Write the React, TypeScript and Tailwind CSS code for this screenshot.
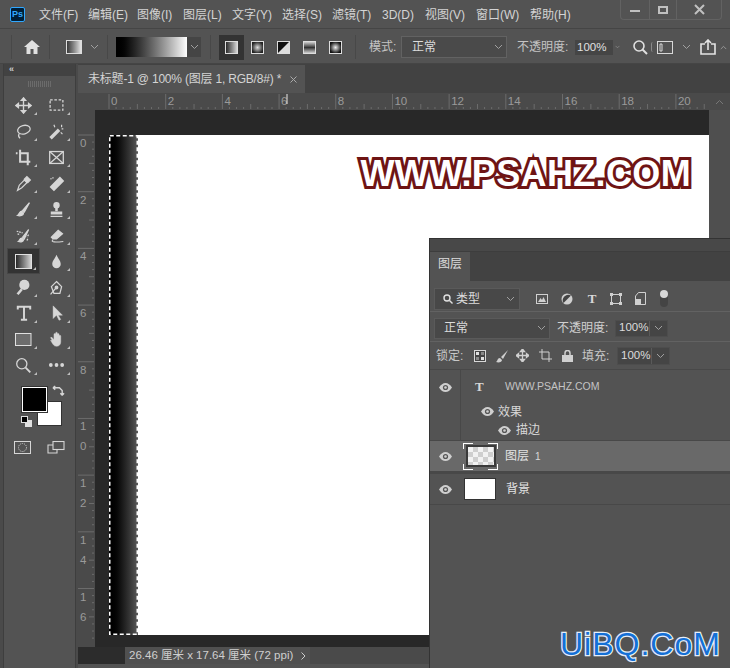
import React from "react";

const F = "[font-family:'Liberation_Sans','Noto_Sans_CJK_SC',sans-serif]";
const C = "#d6d6d6";

const Chev = ({ className = "", color = "#a0a0a0" }: { className?: string; color?: string }) => (
  <svg width="9" height="6" viewBox="0 0 9 6" className={className}><path d="M1 1l3.5 3.5L8 1" fill="none" stroke={color} strokeWidth="1" /></svg>
);

const Svg = ({ children, w = 20, h = 20 }: { children: React.ReactNode; w?: number; h?: number }) => (
  <svg width={17} height={17} viewBox={`0 0 ${w} ${h}`} fill="none" stroke={C} strokeWidth="1.5">{children}</svg>
);

const tools: [React.ReactNode, React.ReactNode][] = [
  [
    <Svg><path d="M10 2v16M2 10h16M10 1l-2.5 3h5zM10 19l-2.5-3h5zM1 10l3-2.5v5zM19 10l-3-2.5v5z" fill={C} strokeWidth="1.6" /></Svg>,
    <Svg><rect x="2.5" y="3.5" width="15" height="12" strokeDasharray="3 2" /></Svg>,
  ],
  [
    <Svg><ellipse cx="10.500" cy="8" rx="7.500" ry="5" transform="rotate(-15 10 8)" /><path d="M5 13c-2 2 0 4 1 5" /></Svg>,
    <Svg><path d="M3 18L13 8" strokeWidth="4" /><path d="M16 2v3M15 11l2 2M7 2l1 3M18 7h-2" strokeWidth="1.400" /></Svg>,
  ],
  [
    <Svg><path d="M1 5h2M6 1v14h12M6 5h9v14" strokeWidth="2.400" /></Svg>,
    <Svg><rect x="2" y="3" width="16" height="14" /><path d="M2 3l16 14M18 3L2 17" /></Svg>,
  ],
  [
    <Svg><path d="M3 18l2-6 6-6 3 3-6 6z" strokeWidth="1.400" /><path d="M11 5l3-3 4 4-3 3z" fill={C} /></Svg>,
    <Svg><path d="M4 14L14 4l3 3L7 17z" fill={C} strokeWidth="3" /><path d="M3 5l2-2 2 1" strokeDasharray="1.500 1.500" /></Svg>,
  ],
  [
    <Svg><path d="M17 2L9 11l2 2z" fill={C} /><path d="M8 12c-3 0-3 4-5 5 3 1 7 0 7-3z" fill={C} /></Svg>,
    <Svg><circle cx="10" cy="5" r="3" fill={C} /><path d="M10 8v4" strokeWidth="3" /><path d="M4 13h12v2H4zM3 18h14" fill={C} /></Svg>,
  ],
  [
    <Svg><path d="M16 3L9 12l2 2z" fill={C} /><path d="M8 13c-3 0-2 3-4 4 3 1 6 0 6-2z" fill={C} /><path d="M2 5l7 2M3 8l3 1M16 9l-2 3M15 14l-1 2" strokeDasharray="2 1" /></Svg>,
    <Svg><path d="M4 12l8-8 5 4-7 6H6z" fill={C} /><path d="M6 15c-4 3 3 3 12 2" strokeWidth="1.200" /></Svg>,
  ],
  [
    <svg width="17" height="15" viewBox="0 0 17 15"><defs><linearGradient id="tg"><stop offset="0" stopColor="#222" /><stop offset="1" stopColor="#d8d8d8" /></linearGradient></defs><rect x="0.500" y="0.500" width="16" height="14" fill="url(#tg)" stroke="#e0e0e0" /></svg>,
    <Svg><path d="M10 2c2 5 5 7 5 11a5 5 0 01-10 0c0-4 3-6 5-11z" fill={C} stroke="none" /></Svg>,
  ],
  [
    <Svg><circle cx="11" cy="7" r="6" fill={C} stroke="none" /><path d="M8 12l-5 6" strokeWidth="3" /></Svg>,
    <Svg><path d="M10 3l6 6-2 8H7L4 9z" /><path d="M3 18L9 11" /><circle cx="10" cy="10" r="1.500" fill={C} /></Svg>,
  ],
  [
    <svg width="16" height="16" viewBox="0 0 18 18" fill="none" stroke={C}><path d="M2 5V2h14v3M9 2v14M5.500 16.500h7" strokeWidth="2.200" /></svg>,
    <Svg><path d="M6 1v15l4-4 3 6 2-1-3-5h5z" fill={C} strokeWidth="0.500" /></Svg>,
  ],
  [
    <svg width="17" height="13" viewBox="0 0 17 13"><rect x="0.500" y="0.500" width="15.500" height="12" fill="#6d6d6d" stroke="#e0e0e0" /></svg>,
    <Svg><path d="M5 11l-2-3 1-1 3 3V4a1 1 0 012 0V2.500a1 1 0 012 0V4a1 1 0 012 0v2a1 1 0 012 0v7c0 3-2 5-5 5-3 0-4-2-7-7z" fill={C} strokeWidth="0.500" /></Svg>,
  ],
  [
    <Svg><circle cx="8" cy="8" r="6" /><path d="M12.500 12.500L18 18" strokeWidth="2.200" /></Svg>,
    <svg width="17" height="6" viewBox="0 0 18 6" fill={C}><circle cx="3" cy="3" r="2" /><circle cx="9" cy="3" r="2" /><circle cx="15" cy="3" r="2" /></svg>,
  ],
];

function Toolbar() {
  return (
    <div className="w-[78px] shrink-0 flex h-full">
      <div className="w-[4px] bg-[#4a4a4a] border-r border-[#3e3e3e]" />
      <div className="w-[71px] flex flex-col bg-[#535353]">
        <div className="h-[12px] bg-[#424242] text-[#d0d0d0] text-[9px] leading-[11px] pl-[5px] tracking-[-1px] font-bold">‹‹</div>
        <div className="h-[6px] mt-[5px] mx-[24px] bg-[repeating-linear-gradient(90deg,#6b6b6b_0_1px,transparent_1px_2px)]" />
        <div className="grid grid-cols-[33px_33px] auto-rows-[26px] pl-[3px] mt-[5px]">
          {tools.map((row, r) =>
            row.map((ic, c) => (
              <div key={`${r}-${c}`} className={`relative flex items-center justify-center ${r === 6 && c === 0 ? "bg-[#333333] border border-[#464646]" : ""}`}>
                {ic}
                <span className="absolute right-[3px] bottom-[3px] w-0 h-0 border-l-[3px] border-l-transparent border-b-[3px] border-b-[#bdbdbd]" />
              </div>
            ))
          )}
        </div>
        <div className="relative h-[54px] mt-[5px] left-[1px]">
          <div className="absolute left-[17px] top-[4px] w-[25px] h-[25px] bg-black border border-white z-10 outline outline-1 outline-[#333]" />
          <div className="absolute left-[32px] top-[18px] w-[25px] h-[25px] bg-white border border-[#333]" />
          <svg className="absolute left-[47px] top-[2px]" width="13" height="12" viewBox="0 0 14 13" fill="none" stroke={C} strokeWidth="1.500"><path d="M1 3h7l3 3v5M1 3l2.500-2M1 3l2.500 2M11 11l-2-2M11 11l2-2" /></svg>
          <div className="absolute left-[16px] top-[33px] w-[11px] h-[11px]">
            <div className="absolute left-[4px] top-[4px] w-[7px] h-[7px] bg-[#e0e0e0]" />
            <div className="absolute left-0 top-0 w-[7px] h-[7px] bg-black border border-[#ddd]" />
          </div>
        </div>
        <div className="flex pl-[10px] gap-[16px] mt-[4px] items-end">
          <svg width="17" height="13" viewBox="0 0 17 13" fill="none" stroke={C}><rect x="0.500" y="0.500" width="16" height="12" /><circle cx="8.500" cy="6.500" r="4" strokeDasharray="1 1" /></svg>
          <svg width="18" height="13" viewBox="0 0 18 13" fill="none" stroke={C} strokeWidth="1.100"><rect x="6" y="0.500" width="11" height="8" /><path d="M6 4H1v8h9V8.500" /></svg>
        </div>
      </div>
      <div className="w-[3px] bg-[#4a4a4a] border-l border-[#3e3e3e]" />
    </div>
  );
}

function OptionsBar() {
  const modes = [
    <><rect x="0.500" y="0.500" width="12" height="12" fill="url(#m1)" stroke="#ddd" /></>,
    <><rect x="0.500" y="0.500" width="12" height="12" fill="url(#m2)" stroke="#ddd" /></>,
    <><rect x="0.500" y="0.500" width="12" height="12" fill="#ddd" stroke="#ddd" /><path d="M1 1h11L1 12z" fill="#111" /></>,
    <><rect x="0.500" y="0.500" width="12" height="12" fill="url(#m3)" stroke="#ddd" /></>,
    <><rect x="0.500" y="0.500" width="12" height="12" fill="url(#m4)" stroke="#ddd" /></>,
  ];
  return (
    <div className="h-[36px] pt-[2px] bg-[#535353] border-t border-b border-[#454545] flex items-center text-[12px] text-[#c4c4c4] relative">
      <div className="w-[1px] h-[24px] bg-[#484848] ml-[11px]" />
      <svg className="ml-[12px]" width="16" height="14" viewBox="0 0 16 14" fill="#e0e0e0"><path d="M8 0L0 7h2.500v7h4V9h3v5h4V7H16z" /></svg>
      <div className="w-[1px] h-[24px] bg-[#484848] ml-[9px]" />
      <div className="ml-[16px] w-[16px] h-[14px] border border-[#ddd] bg-gradient-to-r from-[#3a3a3a] to-[#e4e4e4]" />
      <Chev className="ml-[8px]" />
      <div className="w-[1px] h-[24px] bg-[#484848] ml-[8px]" />
      <div className="ml-[8px] flex h-[20px] w-[85px] bg-[#454545]">
        <div className="w-[71px] h-full bg-gradient-to-r from-black to-white" />
        <div className="flex-1 flex items-center justify-center"><Chev /></div>
      </div>
      <div className="w-[1px] h-[24px] bg-[#484848] ml-[9px]" />
      <svg width="0" height="0" className="absolute">
        <defs>
          <linearGradient id="m1"><stop offset="0" stopColor="#222" /><stop offset="1" stopColor="#ddd" /></linearGradient>
          <radialGradient id="m2"><stop offset="0" stopColor="#ddd" /><stop offset="1" stopColor="#222" /></radialGradient>
          <linearGradient id="m3" x2="0" y2="1"><stop offset="0" stopColor="#ddd" /><stop offset="0.500" stopColor="#333" /><stop offset="1" stopColor="#ddd" /></linearGradient>
          <radialGradient id="m4"><stop offset="0" stopColor="#eee" /><stop offset="1" stopColor="#111" /></radialGradient>
        </defs>
      </svg>
      <div className="ml-[8px] flex items-center">
        {modes.map((m, i) => (
          <div key={i} className={`${i === 0 ? "w-[25px] h-[25px] bg-[#333333]" : "w-[26px] h-[25px]"} flex items-center justify-center`}>
            <svg width="13" height="13" viewBox="0 0 13 13">{m}</svg>
          </div>
        ))}
      </div>
      <div className="w-[1px] h-[24px] bg-[#484848] ml-[7px]" />
      <span className="ml-[13px] w-[32px]">模式:</span>
      <div className="w-[106px] h-[22px] border border-[#626262] bg-[#4a4a4a] flex items-center justify-between pl-[10px] pr-[3px] text-[#dcdcdc]">
        <span>正常</span><Chev />
      </div>
      <span className="ml-[10px] w-[58px]">不透明度:</span>
      <div className="w-[38px] h-[15px] bg-[#454545] text-[#e0e0e0] leading-[15px] pl-[2px] text-[11.500px]">100%</div>
      <Chev className="ml-[2px] w-[5px]" />
      <svg className="ml-[13px]" width="15" height="15" viewBox="0 0 15 15" fill="none" stroke="#e0e0e0" strokeWidth="1.600"><circle cx="6" cy="6" r="5" /><path d="M9.500 9.500L14 14" strokeWidth="2" /></svg>
      <div className="w-[2px] h-[10px] border-l border-[#8a8a8a] ml-[3px] rounded-l-full" />
      <svg className="ml-[4px]" width="16" height="13" viewBox="0 0 16 13" fill="none" stroke="#d8d8d8"><rect x="0.500" y="0.500" width="15" height="12" /><path d="M3 3h2v7H3z" /></svg>
      <Chev className="ml-[9px]" />
      <svg className="ml-[9px]" width="16" height="16" viewBox="0 0 16 16" fill="none" stroke="#e4e4e4" strokeWidth="1.600"><path d="M5 5H1v10h14V5h-4M8 11V1M5 4l3-3 3 3" /></svg>
      <svg className="ml-[4px] rotate-180" width="7" height="5" viewBox="0 0 9 6"><path d="M1 1l3.500 3.500L8 1" fill="none" stroke="#a8a8a8" /></svg>
    </div>
  );
}

const TICK = "#6c6c6c";

function HRuler() {
  const labels = ["0", "2", "4", "6", "8", "10", "12", "14", "16", "18", "20"];
  return (
    <svg width="631" height="17" viewBox="0 0 631 17" className="block">
      {Array.from({ length: 89 }).map((_, i) => {
        const x = 31 + (i * 56.69) / 8;
        const major = i % 8 === 0;
        return <line key={i} x1={x} x2={x} y1={major ? 1 : i % 4 === 0 ? 11 : 14} y2={16} stroke={TICK} strokeWidth="1" />;
      })}
      {labels.map((l, i) => (
        <text key={l} x={33 + i * 56.69} y={12} fontSize="11.500" fill="#9a9a9a" fontFamily="Liberation Sans">{l}</text>
      ))}
      <line x1="209" x2="209" y1="1" y2="11" stroke="#e8e8e8" />
    </svg>
  );
}

function VRuler() {
  const labels: [string, number][] = [["0", 0], ["2", 1], ["4", 2], ["6", 3], ["8", 4], ["1", 5], ["1", 6], ["1", 7], ["1", 8]];
  const second = ["0", "2", "4", "6"];
  return (
    <svg width="17" height="537" viewBox="0 0 17 537" className="block shrink-0">
      {Array.from({ length: 72 }).map((_, i) => {
        const y = 25 + (i * 56.69) / 8;
        const major = i % 8 === 0;
        return <line key={i} x1={major ? 0 : i % 4 === 0 ? 11 : 14} x2={16} y1={y} y2={y} stroke={TICK} />;
      })}
      {labels.map(([l, i], k) => (
        <text key={k} x={2} y={37 + i * 56.69} fontSize="11.500" fill="#9a9a9a" fontFamily="Liberation Sans">{l}</text>
      ))}
      {second.map((l, k) => (
        <text key={k} x={2} y={37 + (5 + k) * 56.69 + 20} fontSize="11.500" fill="#9a9a9a" fontFamily="Liberation Sans">{l}</text>
      ))}
    </svg>
  );
}

const Eye = ({ className = "" }: { className?: string }) => (
  <svg className={className} width="13" height="9" viewBox="0 0 13 9"><path d="M0 4.500C2 1.500 4 0 6.500 0S11 1.500 13 4.500C11 7.500 9 9 6.500 9S2 7.500 0 4.500z" fill="#cfcfcf" /><circle cx="6.500" cy="4.500" r="2.600" fill="#555" /><circle cx="6.500" cy="4.500" r="1.300" fill="#cfcfcf" /></svg>
);

function LayersPanel() {
  return (
    <div className="absolute left-[429px] top-[238px] w-[301px] h-[430px] bg-[#535353] border-l border-t border-[#333] text-[12px] text-[#d0d0d0] flex flex-col z-20">
      <div className="h-[12px] bg-[#484848] shrink-0" />
      <div className="h-[30px] bg-[#424242] flex shrink-0 border-t border-[#3d3d3d]">
        <div className="w-[40px] pb-[5px] bg-[#535353] flex items-center justify-center text-[#dcdcdc]">图层</div>
      </div>
      <div className="h-[31px] flex items-center pl-[4px] pt-[6px] shrink-0 border-b border-[#626262] pb-[1px]">
        <div className="w-[86px] h-[22px] bg-[#484848] border border-[#5a5a5a] flex items-center pl-[8px] pr-[4px] gap-[3px]">
          <svg width="10" height="10" viewBox="0 0 10 10" fill="none" stroke="#e0e0e0" strokeWidth="1.400"><circle cx="4" cy="4" r="3" /><path d="M6.500 6.500L9.500 9.500" /></svg>
          <span className="flex-1 text-[#dcdcdc]">类型</span><Chev />
        </div>
        <svg className="ml-[16px]" width="12" height="10" viewBox="0 0 12 10"><rect x="0.500" y="0.500" width="11" height="9" fill="none" stroke="#d0d0d0" /><path d="M2 8l2.500-4 1.500 2 1.500-3L10 8z" fill="#d0d0d0" /></svg>
        <svg className="ml-[13px]" width="12" height="12" viewBox="0 0 12 12"><circle cx="6" cy="6" r="5.500" fill="#d0d0d0" /><path d="M10 2.500L2.500 10A5.500 5.500 0 0110 2.500z" fill="#444" /></svg>
        <span className="ml-[13px] text-[13px] font-bold text-[#d8d8d8] [font-family:'Liberation_Serif',serif] w-[12px] text-center">T</span>
        <svg className="ml-[12px]" width="12" height="12" viewBox="0 0 12 12" fill="none" stroke="#d0d0d0"><rect x="1.500" y="1.500" width="9" height="9" /><path d="M0 0h3v3H0zM9 0h3v3H9zM0 9h3v3H0zM9 9h3v3H9z" fill="#d0d0d0" stroke="none" /></svg>
        <svg className="ml-[13px]" width="11" height="13" viewBox="0 0 11 13" fill="none" stroke="#d0d0d0"><path d="M3.500.5h7v12h-10V4z" /><path d="M0 7h6v6H0z" fill="#d0d0d0" stroke="none" /></svg>
        <div className="ml-[14px] w-[8px] h-[17px] rounded-full bg-[#444] relative"><div className="absolute left-0 top-0 w-[8px] h-[8px] rounded-full bg-[#d8d8d8]" /></div>
      </div>
      <div className="h-[30px] pt-[3px] flex items-center pl-[4px] shrink-0 border-b border-[#626262]">
        <div className="w-[116px] h-[21px] bg-[#484848] border border-[#5a5a5a] flex items-center justify-between pl-[9px] pr-[3px] text-[#dcdcdc]"><span>正常</span><Chev /></div>
        <span className="ml-[7px] w-[58px]">不透明度:</span>
        <div className="w-[53px] h-[17px] bg-[#454545] flex items-center pl-[3px] text-[11.500px] text-[#dcdcdc] border border-[#4d4d4d]">
          <span className="flex-1">100%</span><span className="w-[1px] h-full bg-[#5a5a5a]" /><Chev className="mx-[4px]" />
        </div>
      </div>
      <div className="h-[28px] flex items-center pl-[6px] shrink-0 border-b border-[#484848]">
        <span className="w-[33px] text-[#c8c8c8]">锁定:</span>
        <svg className="ml-[5px]" width="12" height="12" viewBox="0 0 12 12"><rect x="0.500" y="0.500" width="11" height="11" fill="#444" stroke="#d8d8d8" /><path d="M2 2h3v3H2zM7 7h3v3H7z" fill="#e0e0e0" /><path d="M7 2h3v3H7zM2 7h3v3H2z" fill="#888" /></svg>
        <svg className="ml-[9px]" width="14" height="14" viewBox="0 0 14 14" fill="#d0d0d0"><path d="M13 1L6 8l2 2zM5 9c-3 0-2 3-4 4 3 1 6 0 6-2z" /></svg>
        <svg className="ml-[7px]" width="13" height="13" viewBox="0 0 13 13" fill="none" stroke="#d0d0d0" strokeWidth="1.300"><path d="M6.500 0v13M0 6.500h13M6.500 0L4.500 2.500h4zM6.500 13l-2-2.500h4zM0 6.500L2.500 4.500v4zM13 6.500l-2.500-2v4z" fill="#d0d0d0" /></svg>
        <svg className="ml-[10px]" width="13" height="13" viewBox="0 0 13 13" fill="none" stroke="#d0d0d0"><path d="M3 0v10h10M0 3h10v10" /></svg>
        <svg className="ml-[10px]" width="11" height="12" viewBox="0 0 11 12" fill="#d0d0d0"><rect y="5" width="11" height="7" /><path d="M3 5V3a2.500 2.500 0 015 0v2" fill="none" stroke="#d0d0d0" strokeWidth="1.500" /></svg>
        <span className="ml-[9px] w-[32px] text-[#c8c8c8]">填充:</span>
        <div className="ml-[3px] w-[53px] h-[18px] bg-[#454545] flex items-center pl-[3px] text-[11.500px] text-[#dcdcdc] border border-[#4d4d4d]">
          <span className="flex-1">100%</span><span className="w-[1px] h-full bg-[#5a5a5a]" /><Chev className="mx-[4px]" />
        </div>
      </div>
      <div className="h-[71px] shrink-0 flex border-b border-[#484848]">
        <div className="w-[31px] border-r border-[#484848] flex justify-center pt-[13px]"><Eye /></div>
        <div className="flex-1 flex flex-col">
          <div className="h-[33px] flex items-center">
            <span className="ml-[14px] w-[14px] text-[13px] font-bold text-[#d8d8d8] [font-family:'Liberation_Serif',serif]">T</span>
            <span className="ml-[16px] text-[10.500px] text-[#c4c4c4]">WWW.PSAHZ.COM</span>
          </div>
          <div className="h-[17px] flex items-center pl-[20px] gap-[4px]"><Eye /><span className="text-[#d8d8d8]">效果</span></div>
          <div className="h-[20px] flex items-center pl-[37px] gap-[5px]"><Eye /><span className="text-[#d8d8d8]">描边</span></div>
        </div>
      </div>
      <div className="h-[30px] shrink-0 flex bg-[#696969] items-center">
        <div className="w-[31px] flex justify-center"><Eye /></div>
        <div className="ml-[2px] w-[35px] h-[27px] relative flex items-center justify-center">
          <div className="w-[30px] h-[22px] border-2 border-[#3a3a3a] bg-[repeating-conic-gradient(#cfcfcf_0_25%,#f2f2f2_0_50%)] bg-[length:10px_10px]" />
          <span className="absolute left-0 top-0 w-[10px] h-[6px] border-l border-t border-white" />
          <span className="absolute right-0 top-0 w-[10px] h-[6px] border-r border-t border-white" />
          <span className="absolute left-0 bottom-0 w-[10px] h-[6px] border-l border-b border-white" />
          <span className="absolute right-0 bottom-0 w-[10px] h-[6px] border-r border-b border-white" />
        </div>
        <span className="ml-[7px] text-[#e4e4e4]">图层</span>
        <span className="ml-[6px] text-[10px] text-[#d8d8d8]">1</span>
      </div>
      <div className="h-[3px] shrink-0 bg-[#484848]" />
      <div className="h-[31px] shrink-0 flex items-center border-b border-[#484848]">
        <div className="w-[31px] flex justify-center"><Eye /></div>
        <div className="ml-[3px] w-[32px] h-[22px] border border-[#333] bg-white" />
        <span className="ml-[10px] text-[#e4e4e4]">背景</span>
      </div>
    </div>
  );
}

export default function App() {
  const menus = [
    ["文件(F)", 37], ["编辑(E)", 37], ["图像(I)", 34], ["图层(L)", 36], ["文字(Y)", 37], ["选择(S)", 37], ["滤镜(T)", 37], ["3D(D)", 30], ["视图(V)", 38], ["窗口(W)", 42], ["帮助(H)", 39],
  ] as [string, number][];
  const gaps = [12, 12, 12, 13, 13, 13, 13, 13, 13, 12, 0];
  return (
    <div className={`${F} relative w-[730px] h-[668px] overflow-hidden bg-[#535353] flex flex-col`}>
      <div className="h-[28px] shrink-0 flex items-center relative">
        <div className="ml-[10px] w-[15px] h-[15px] rounded-[2px] bg-[#001e36] border border-[#31a8ff] text-[#31a8ff] text-[9px] leading-[13px] text-center font-bold">Ps</div>
        <div className="ml-[14px] pt-[2px] flex text-[12px] text-[#d4d4d4]">
          {menus.map(([m, w], i) => (
            <span key={m} className="whitespace-nowrap" style={{ width: w, marginRight: gaps[i] }}>{m}</span>
          ))}
        </div>
        <div className="absolute right-[8px] top-0 w-[102px] h-[20px] border border-t-0 border-[#626262] rounded-b-[4px] flex">
          <div className="w-[29px] flex items-center justify-center border-r border-[#626262]"><div className="w-[10px] h-[2px] bg-[#c0c0c0] mt-[3px]" /></div>
          <div className="w-[27px] flex items-center justify-center border-r border-[#626262]"><div className="w-[10px] h-[8px] border-2 border-[#c0c0c0]" /></div>
          <div className="flex-1 flex items-center justify-center">
            <svg width="11" height="11" viewBox="0 0 11 11"><path d="M1 1l9 9M10 1l-9 9" stroke="#c0c0c0" strokeWidth="2" /></svg>
          </div>
        </div>
      </div>
      <OptionsBar />
      <div className="flex flex-1 min-h-0">
        <Toolbar />
        <div className="flex-1 min-w-0 flex flex-col">
          <div className="h-[29px] shrink-0 bg-[#424242] flex items-end">
            <div className="h-[28px] w-[227px] bg-[#535353] flex items-center pl-[10px] text-[12px] tracking-[-0.2px] text-[#d4d4d4] whitespace-nowrap">
              未标题-1 @ 100% (图层 1, RGB/8#) *
              <svg className="ml-[9px]" width="7" height="7" viewBox="0 0 7 7"><path d="M0.500 0.500l6 6M6.500 0.500l-6 6" stroke="#aaa" /></svg>
            </div>
          </div>
          <div className="h-[17px] shrink-0 bg-[#4a4a4a] flex">
            <HRuler />
            <div className="flex-1 flex items-center justify-center"><Chev className="rotate-180" color="#777" /></div>
          </div>
          <div className="h-[537px] shrink-0 flex">
            <div className="bg-[#4a4a4a]"><VRuler /></div>
            <div className="w-[614px] bg-[#282828] pt-[25px] pl-[14px]">
              <div className="w-[600px] h-[500px] bg-white flex relative">
                <div className="relative w-[29px] h-full bg-gradient-to-r from-black to-[#5a5a5a]">
                  <svg className="absolute inset-0" width="29" height="500" viewBox="0 0 29 500" fill="none">
                    <rect x="0.750" y="0.750" width="27.500" height="498.500" stroke="#ffffff" strokeWidth="1.500" strokeDasharray="4 2.500" />
                  </svg>
                </div>
                <div className="absolute right-[18px] top-[19px] text-[36px] leading-[40px] font-bold text-white tracking-[0.350px] [-webkit-text-stroke:6px_#6e1414] [paint-order:stroke_fill] whitespace-nowrap">WWW.PSAHZ.COM</div>
              </div>
            </div>
            <div className="flex-1 bg-[#4f4f4f]" />
          </div>
          <div className="h-[17px] shrink-0 flex bg-[#4a4a4a] text-[11.500px] text-[#cfcfcf]">
            <div className="w-[47px] bg-[#2c2c2c]" />
            <div className="w-[185px] flex items-center pl-[4px] bg-[#505050] whitespace-nowrap">26.46 厘米 x 17.64 厘米 (72 ppi)<Chev className="-rotate-90 ml-[6px]" color="#ccc" /></div>
            <div className="flex-1" />
          </div>
          <div className="flex-1" />
        </div>
      </div>
      <LayersPanel />
      <div className="absolute left-[560px] top-[626px] z-30 text-[32px] leading-[36px] tracking-[1px] text-[#1470d6] [-webkit-text-stroke:2.500px_#e6eef8] [paint-order:stroke_fill] whitespace-nowrap [font-family:'Liberation_Sans',sans-serif]">UiBQ.CoM</div>
    </div>
  );
}
